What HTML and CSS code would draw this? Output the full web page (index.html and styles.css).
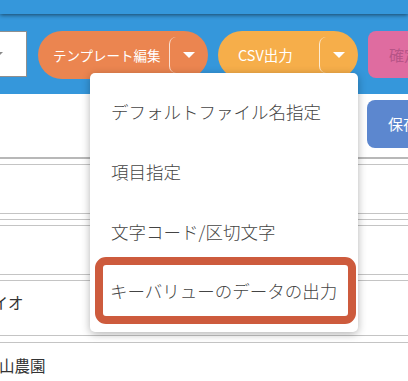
FILE: index.html
```html
<!DOCTYPE html>
<html lang="ja">
<head>
  <meta charset="UTF-8">
  <meta name="viewport" content="width=device-width, initial-scale=1.0">
  <title>CSV出力</title>
  <link rel="stylesheet" href="styles.css">
</head>
<body>
  <div class="topbar"></div>

  <div class="toolbar">
    <div class="select-box"><span class="select-arrow"></span></div>

    <div class="btn-group btn-orange">
      <span class="btn-main btn-main-template">テンプレート編集</span>
      <span class="btn-toggle"><span class="caret"></span></span>
    </div>

    <div class="btn-group btn-yellow">
      <span class="btn-main btn-main-csv">CSV出力</span>
      <span class="btn-toggle"><span class="caret"></span></span>
    </div>

    <div class="btn btn-pink">確定</div>
  </div>

  <div class="actions">
    <div class="btn btn-save">保存</div>
  </div>

  <div class="grid">
    <div class="rule rule-thick"></div>
    <div class="gap"></div>
    <div class="rule"></div>
    <div class="row"></div>
    <div class="rule"></div>
    <div class="gap"></div>
    <div class="rule"></div>
    <div class="gap"></div>
    <div class="rule"></div>
    <div class="row"></div>
    <div class="rule"></div>
    <div class="gap"></div>
    <div class="rule"></div>
    <div class="row row-text"><span class="cell cell-bio">バイオ</span></div>
    <div class="rule"></div>
    <div class="gap gap-wide"></div>
    <div class="rule"></div>
    <div class="row row-text row-text-last"><span class="cell cell-farm">山農園</span></div>
  </div>

  <!-- CSV出力 dropdown -->
  <ul class="menu">
    <li class="menu-item">デフォルトファイル名指定</li>
    <li class="menu-item">項目指定</li>
    <li class="menu-item">文字コード/区切文字</li>
    <li class="menu-item menu-item-marked">キーバリューのデータの出力</li>
  </ul>
</body>
</html>
```

FILE: styles.css
```css
body {
  margin: 0;
  width: 408px;
  height: 381px;
  overflow: hidden;
  position: relative;
  background-color: #fff;
  font-family: "Noto Sans CJK JP", "Noto Sans", sans-serif;
  color: #333;
}
.topbar {
  position: relative;
  z-index: 1;
  height: 14px;
  background-color: #3597db;
  box-shadow: 0 1px 4px rgba(0, 0, 0, 0.55);
}
.toolbar {
  display: flex;
  align-items: flex-start;
  gap: 10px;
  height: 63px;
  padding-top: 17px;
  background-color: #3597db;
}
.select-box {
  flex-shrink: 0;
  position: relative;
  width: 60px;
  height: 44px;
  margin-left: -35px;
  margin-right: 1px;
  background-color: #fff;
  border: 1px solid #8f8f8f;
}
.select-arrow {
  position: absolute;
  left: 25px;
  top: 20px;
  border-left: 6px solid transparent;
  border-right: 6px solid transparent;
  border-top: 6px solid #8a8a8a;
}
.btn-group {
  flex-shrink: 0;
  display: flex;
  align-items: center;
  height: 48px;
  border-radius: 24px;
  color: #fff;
  font-size: 13.5px;
}
.btn-orange {
  background-color: #eb8550;
}
.btn-yellow {
  background-color: #f6ae4a;
}
.btn-main {
  box-sizing: border-box;
  line-height: 48px;
  white-space: nowrap;
}
.btn-main-template {
  width: 131px;
  padding-left: 15px;
}
.btn-main-csv {
  width: 101px;
  padding-left: 20px;
  font-size: 14.5px;
}
.btn-toggle {
  display: flex;
  align-items: center;
  justify-content: center;
  width: 38px;
  height: 36px;
  border-left: 1px solid rgba(255, 255, 255, 0.75);
  border-radius: 7px 0 0 7px;
}
.caret {
  border-left: 6px solid transparent;
  border-right: 6px solid transparent;
  border-top: 6px solid #fff;
}
.btn {
  flex-shrink: 0;
  width: 80px;
  padding-left: 21px;
  border-radius: 8px;
  font-size: 15px;
  white-space: nowrap;
}
.btn-pink {
  height: 47px;
  line-height: 47px;
  background-color: #df6ca0;
  color: #b65487;
}
.actions {
  height: 57px;
  padding-left: 367px;
}
.btn-save {
  margin-top: 6px;
  height: 48px;
  line-height: 48px;
  background-color: #5c87cf;
  color: #fff;
}
.grid {
  font-size: 15.5px;
}
.rule {
  height: 1px;
  background-color: #c4c4c4;
}
.rule-thick {
  height: 2px;
  background-color: #b8b8b8;
}
.gap {
  height: 5px;
}
.gap-wide {
  height: 6px;
}
.row {
  height: 48px;
}
.row-text {
  height: 54px;
  box-sizing: border-box;
  padding-top: 13px;
  line-height: 16px;
}
.row-text-last {
  padding-top: 14px;
}
.cell {
  white-space: nowrap;
}
.cell-bio {
  margin-left: -23px;
}
.cell-farm {
  margin-left: -1px;
}
.menu {
  position: absolute;
  left: 90px;
  top: 73px;
  width: 268px;
  margin: 0;
  padding: 9px 0 10px;
  list-style: none;
  background-color: #fff;
  border-radius: 5px;
  box-shadow: 0 2px 9px rgba(0, 0, 0, 0.3);
  z-index: 2;
}
.menu-item {
  height: 60px;
  line-height: 60px;
  padding-left: 21px;
  font-size: 17.5px;
  font-weight: 300;
  color: #444;
  white-space: nowrap;
}
.menu-item-marked {
  height: 51px;
  line-height: 51px;
  margin: -5px 2px -2px 5px;
  padding-left: 7px;
  border: 8px solid #cd5b3d;
  border-radius: 11px;
}
```
